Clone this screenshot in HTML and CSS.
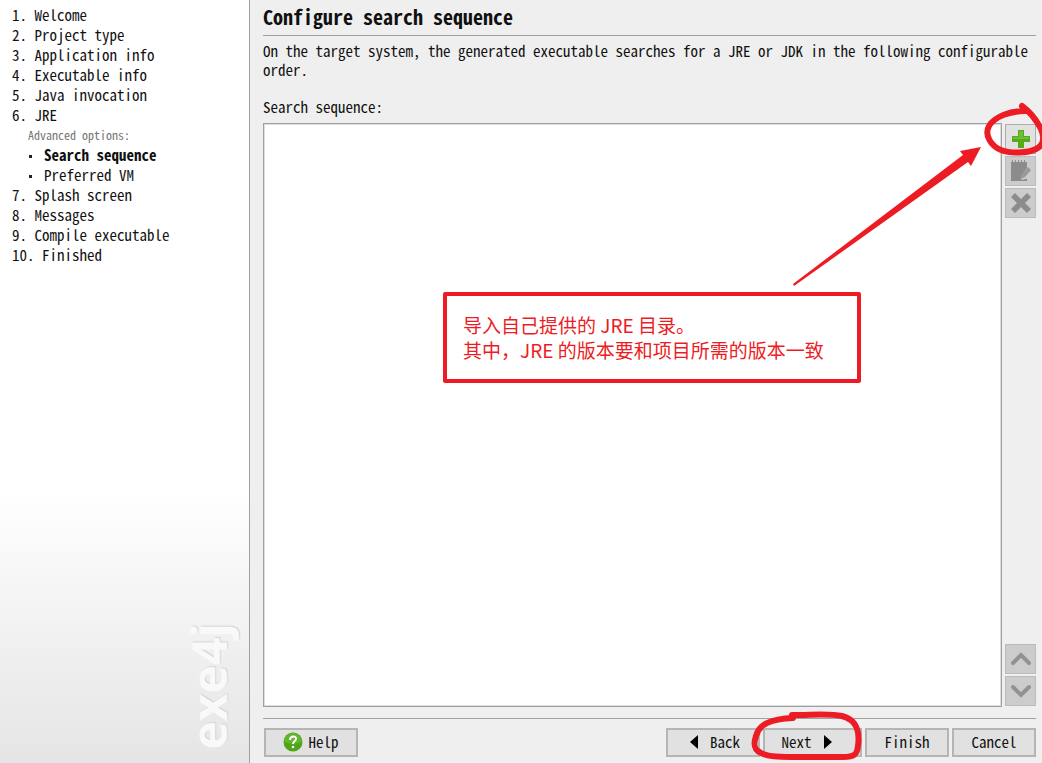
FILE: index.html
```
<!DOCTYPE html>
<html lang="en">

<head>
    <meta charset="UTF-8">
    <meta name="viewport" content="width=device-width, initial-scale=1.0">
    <title>exe4j - Configure search sequence</title>
    <link rel="stylesheet" href="styles.css">
</head>

<body>
    <!-- Wizard steps -->
    <aside class="sidebar">
        <ul class="steps">
            <li>1. Welcome</li>
            <li>2. Project type</li>
            <li>3. Application info</li>
            <li>4. Executable info</li>
            <li>5. Java invocation</li>
            <li>6. JRE
                <p class="advanced">Advanced options:</p>
                <ul class="substeps">
                    <li class="active">Search sequence</li>
                    <li>Preferred VM</li>
                </ul>
            </li>
            <li>7. Splash screen</li>
            <li>8. Messages</li>
            <li>9. Compile executable</li>
            <li>10. Finished</li>
        </ul>
        <div class="logo">exe4j</div>
    </aside>

    <!-- Current step -->
    <main>
        <h1>Configure search sequence</h1>
        <p class="intro">On the target system, the generated executable searches for a JRE or JDK in the following configurable order.</p>
        <h2 id="listLabel">Search sequence:</h2>

        <div class="sequence">
            <div class="sequence-list" role="listbox" aria-labelledby="listLabel">
                <div class="note" lang="zh-CN">
                    <p>导入自己提供的 JRE 目录。</p>
                    <p>其中，JRE 的版本要和项目所需的版本一致</p>
                </div>
                <svg class="arrow" width="190" height="152" viewBox="0 0 190 152">
                    <path d="M1 148 L171 19 L168 15 L189 11 L179 30 L176 26 L2 150 Z" fill="#ed1c24"/>
                </svg>
            </div>

            <div class="toolbar">
                <button class="tool add" aria-label="Add">
                    <svg width="20" height="20" viewBox="0 0 20 20">
                        <path d="M7 1h6v6h6v6h-6v6H7v-6H1V7h6z" fill="#56a91b"/>
                        <path d="M8 2h4v6h6v2H2V8h6z" fill="#70bd35"/>
                    </svg>
                    <svg class="ring-add" width="62" height="58" viewBox="0 0 62 58">
                        <path d="M42 10 C28 10 12 15 6 25 C1 34 8 45 18 49 C28 53 45 52 53 48 C61 44 62 37 58 28 C54 20 47 11 39 5" fill="none" stroke="#ed1c24" stroke-width="6" stroke-linecap="round" stroke-linejoin="round"/>
                    </svg>
                </button>
                <button class="tool" aria-label="Edit" disabled>
                    <svg width="22" height="22" viewBox="0 0 22 22">
                        <path d="M1 2h16v6l-5 7-1 5 5-1 1-1v3H1z" fill="#8c8c8c"/>
                        <path d="M12 15l6-8 3 3-6 7-4 2z" fill="#999"/>
                        <path d="M2.500 0v3M5.500 0v3M8.500 0v3M11.500 0v3M14.500 0v3" stroke="#8c8c8c"/>
                    </svg>
                </button>
                <button class="tool" aria-label="Remove" disabled>
                    <svg width="20" height="20" viewBox="0 0 20 20">
                        <path d="M4 0l6 6 6-6 4 4-6 6 6 6-4 4-6-6-6 6-4-4 6-6-6-6z" fill="#8c8c8c"/>
                    </svg>
                </button>
                <button class="tool up" aria-label="Move up" disabled>
                    <svg width="20" height="14" viewBox="0 0 20 14">
                        <path d="M2 11l8-8 8 8" fill="none" stroke="#929292" stroke-width="4" stroke-linecap="round"/>
                    </svg>
                </button>
                <button class="tool" aria-label="Move down" disabled>
                    <svg width="20" height="14" viewBox="0 0 20 14">
                        <path d="M2 3l8 8 8-8" fill="none" stroke="#929292" stroke-width="4" stroke-linecap="round"/>
                    </svg>
                </button>
            </div>
        </div>

        <!-- Wizard buttons -->
        <footer>
            <button class="btn help">
                <svg width="20" height="20" viewBox="0 0 20 20">
                    <circle cx="10" cy="10" r="9.500" fill="#4ca616"/>
                    <path d="M1 10a9 9 0 0 1 18 0q-9 3-18 0z" fill="#62b52c"/>
                    <path d="M7 8c0-5 7-4 6-1c0 2-3 2-3 5" fill="none" stroke="#fff" stroke-width="2"/>
                    <circle cx="10" cy="15" r="1.300" fill="#fff"/>
                </svg>
                Help
            </button>
            <button class="btn back">
                <svg width="8" height="14" viewBox="0 0 8 14"><path d="M8 0v14L0 7z"/></svg>
                Back
            </button>
            <button class="btn next">
                Next
                <svg width="8" height="14" viewBox="0 0 8 14"><path d="M0 0v14l8-7z"/></svg>
                <svg class="ring-next" width="112" height="50" viewBox="0 0 112 50">
                    <path d="M42 7 C20 8 8 13 5 25 C2 34 3 39 10 42 C15 45 24 46 40 46 L92 46 C104 46 106 43 107 35 C109 20 106 9 91 5 C78 2 62 4 41 4" fill="none" stroke="#ed1c24" stroke-width="6" stroke-linecap="round" stroke-linejoin="round"/>
                </svg>
            </button>
            <button class="btn">Finish</button>
            <button class="btn">Cancel</button>
        </footer>
    </main>
</body>

</html>
```
FILE: styles.css
```
/* Base Styles */
* {
    margin: 0;
    padding: 0;
    box-sizing: border-box;
}

body {
    display: flex;
    height: 100vh;
    overflow: hidden;
    background-color: #efefef;
    color: #111;
    font-family: 'Noto Sans Mono CJK SC', 'Liberation Mono', monospace;
    font-size: 15px;
    line-height: 20px;
}

/* Sidebar Styles */
.sidebar {
    display: flex;
    flex-direction: column;
    justify-content: space-between;
    flex: 0 0 250px;
    padding: 5px 12px;
    background: linear-gradient(#fff 64%, #e5e5e5);
    border-right: 1px solid #a0a0a0;
}

.steps,
.substeps {
    list-style: none;
}

.advanced {
    padding-left: 16px;
    color: #777;
    font-size: 12px;
    line-height: 20px;
}

.substeps li {
    padding-left: 17px;
}

.substeps li::before {
    content: "";
    display: inline-block;
    width: 3px;
    height: 3px;
    margin-right: 12px;
    vertical-align: middle;
    background-color: #222;
}

.active {
    font-weight: bold;
}

.logo {
    align-self: flex-end;
    writing-mode: vertical-rl;
    transform: rotate(180deg);
    margin-right: 4px;
    padding-top: 8px;
    color: #f9f9f9;
    font-family: 'Open Sans', sans-serif;
    font-size: 48px;
    font-weight: bold;
    line-height: 48px;
    text-shadow: 1px 1px 1px #d4d4d4;
}

/* Content Styles */
main {
    display: flex;
    flex-direction: column;
    flex: 1;
    min-width: 0;
    padding: 0 6px 6px 13px;
}

h1 {
    height: 36px;
    border-bottom: 1px solid #a0a0a0;
    font-size: 20px;
    line-height: 34px;
}

.intro {
    margin: 5px 0 18px;
    line-height: 19px;
}

h2 {
    margin-bottom: 6px;
    font-size: 15px;
    font-weight: normal;
    line-height: 20px;
}

.sequence {
    display: flex;
    flex: 1;
    gap: 3px;
    min-height: 0;
}

.sequence-list {
    position: relative;
    flex: 1;
    background-color: #fff;
    border: 1px solid #a0a0a0;
    box-shadow: inset 0 0 0 1px #ddd;
}

.toolbar {
    display: flex;
    flex-direction: column;
    gap: 2px;
    padding: 1px 0;
}

.tool {
    position: relative;
    display: flex;
    align-items: center;
    justify-content: center;
    width: 31px;
    height: 30px;
    background-color: #ccc;
    border: 1px solid #bbb;
}

.add {
    background-color: #e1e1e1;
    border-color: #adadad;
}

.up {
    margin-top: auto;
}

/* Footer Styles */
footer {
    display: flex;
    gap: 3px;
    margin-top: 11px;
    padding: 9px 0 0 1px;
    border-top: 1px solid #a0a0a0;
}

.btn {
    position: relative;
    display: flex;
    align-items: center;
    justify-content: center;
    gap: 12px;
    width: 84px;
    height: 29px;
    padding-bottom: 2px;
    background-color: #e1e1e1;
    border: 2px solid #b5b5b5;
    color: #111;
    font: inherit;
}

.help {
    gap: 5px;
    width: 94px;
    margin-right: auto;
}

.back {
    width: 94px;
    padding-left: 4px;
}

.next {
    width: 99px;
    padding-right: 12px;
}

/* Annotation Styles */
.note {
    position: absolute;
    top: 168px;
    left: 179px;
    width: 418px;
    padding: 16px 16px 17px;
    border: 4px solid #ed1c24;
    border-radius: 2px;
    color: #ed1c24;
    font-family: 'Noto Sans CJK SC', sans-serif;
    font-size: 19px;
    line-height: 25px;
}

.arrow {
    position: absolute;
    top: 12px;
    right: 19px;
}

.ring-add,
.ring-next {
    position: absolute;
    z-index: 1;
    pointer-events: none;
}

.ring-add {
    top: -24px;
    left: -23px;
}

.ring-next {
    top: -19px;
    left: -14px;
}
```
